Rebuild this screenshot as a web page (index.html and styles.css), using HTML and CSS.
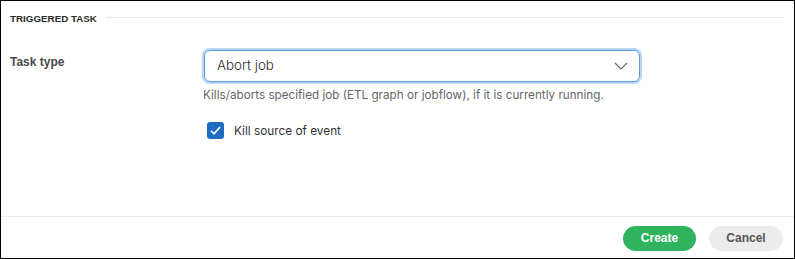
FILE: index.html
```html
<!DOCTYPE html>
<html lang="en">
<head>
    <meta charset="UTF-8">
    <meta name="viewport" content="width=device-width, initial-scale=1.0">
    <title>Triggered task</title>
    <link rel="stylesheet" href="styles.css">
</head>
<body>
    <div class="dialog">
        <div class="dialog-body">
            <div class="section-title">
                <span>Triggered task</span>
                <div class="section-line"></div>
            </div>

            <div class="form-row">
                <label class="row-label" for="task_type">Task type</label>
                <div class="row-field">
                    <div class="select-box">
                        <span class="select-value">Abort job</span>
                        <svg class="chevron" width="14" height="8" viewBox="0 0 14 8">
                            <path d="M1 1 L7 7 L13 1" fill="none" stroke="#666" stroke-width="1.1"/>
                        </svg>
                    </div>
                    <div class="help-text">Kills/aborts specified job (ETL graph or jobflow), if it is currently running.</div>
                    <label class="check-row">
                        <span class="checkbox">
                            <svg width="17" height="17" viewBox="0 0 17 17">
                                <path d="M4 8.8 L7 11.8 L13 5" fill="none" stroke="#fff" stroke-width="1.6"/>
                            </svg>
                        </span>
                        Kill source of event
                    </label>
                </div>
            </div>
        </div>

        <div class="dialog-footer">
            <button class="btn btn-create">Create</button>
            <button class="btn btn-cancel">Cancel</button>
        </div>
    </div>
</body>
</html>
```

FILE: styles.css
```css
body {
    margin: 0;
    font-family: Inter, "Liberation Sans", sans-serif;
    background-color: #fff;
}
.dialog {
    width: 795px;
    height: 259px;
    box-sizing: border-box;
    border: 1px solid #000;
    display: flex;
    flex-direction: column;
}
.dialog-body {
    flex: 1;
    padding: 0 10px 0 9px;
}
.section-title {
    display: flex;
    align-items: center;
    gap: 9px;
    height: 32px;
    padding-top: 1px;
    font-family: "Liberation Sans", Arial, sans-serif;
    font-size: 9.8px;
    font-weight: bold;
    text-transform: uppercase;
    color: #2a2a2a;
}
.section-line {
    flex: 1;
    height: 1px;
    background-color: #e9e9e9;
    margin-top: -1px;
}
.form-row {
    display: flex;
    margin-top: 14px;
}
.row-label {
    width: 192px;
    padding-top: 7px;
    font-family: "Liberation Sans", Arial, sans-serif;
    font-size: 12px;
    font-weight: bold;
    color: #484848;
}
.row-field {
    width: 438px;
}
.select-box {
    height: 30px;
    border: 1px solid #5b9be0;
    border-radius: 6px;
    box-shadow: 0 0 0 2px #b7d4f3;
    display: flex;
    align-items: center;
    justify-content: space-between;
    padding: 0 11px 0 12px;
    margin: 2px 0 0 2px;
    font-size: 13.4px;
    font-weight: 300;
    color: #2a2a2a;
}
.select-value {
    padding-bottom: 2px;
}
.help-text {
    margin-top: 6px;
    margin-left: 1px;
    font-size: 11.7px;
    color: #666;
}
.check-row {
    display: flex;
    align-items: center;
    gap: 10px;
    margin-top: 20px;
    margin-left: 5px;
    font-size: 11.8px;
    color: #333;
}
.checkbox {
    width: 17px;
    height: 17px;
    border-radius: 3px;
    background-color: #1f6cc2;
    display: block;
}
.checkbox svg {
    display: block;
}
.dialog-footer {
    border-top: 1px solid #e9e9e9;
    height: 40px;
    display: flex;
    justify-content: flex-end;
    align-items: center;
    gap: 13px;
    padding: 1px 11px 0 0;
}
.btn {
    height: 25px;
    border: none;
    border-radius: 13px;
    font-family: "Liberation Sans", Arial, sans-serif;
    font-size: 12px;
    font-weight: bold;
    cursor: pointer;
}
.btn-create {
    width: 73px;
    background-color: #2fb35f;
    color: #fff;
}
.btn-cancel {
    width: 74px;
    background-color: #ececec;
    color: #555;
}
```
